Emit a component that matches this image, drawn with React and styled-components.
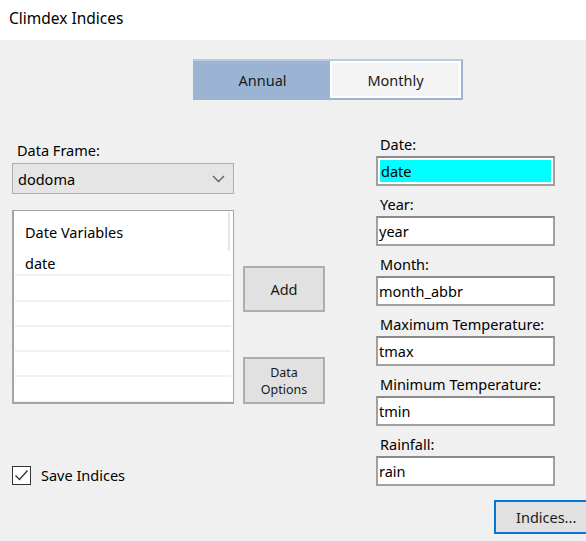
import React, { useState } from 'react';
import styled, { createGlobalStyle } from 'styled-components';

const GlobalStyle = createGlobalStyle`
  html, body {
    margin: 0;
    padding: 0;
    background: #f0f0f0;
  }
  * {
    box-sizing: border-box;
  }
`;

const Window = styled.div`
  width: 586px;
  height: 541px;
  overflow: hidden;
  background: #f0f0f0;
  font-family: "Noto Sans", "Open Sans", sans-serif;
  font-size: 14.5px;
  color: #000;
`;

const TitleBar = styled.div`
  height: 40px;
  background: #fff;
  display: flex;
  align-items: center;
  padding-left: 9px;
  padding-bottom: 4px;
  font-size: 15.5px;
`;

const ToggleRow = styled.div`
  padding: 19px 0 0 193px;
`;

const Toggle = styled.div`
  display: flex;
  width: 270px;
  height: 41px;
  background: #9bb4d3;
  border: 2px solid #9bb4d3;
  border-top-color: #b9cbe1;
`;

const Segment = styled.button`
  flex: ${props => (props.wide ? '0 0 135px' : '1')};
  border: ${props => (props.active ? 'none' : '2px solid #fff')};
  background: ${props => (props.active ? '#9bb4d3' : '#f4f4f4')};
  font-family: inherit;
  font-size: 14.5px;
  color: #1a1a1a;
  padding: 0;
  cursor: pointer;
`;

const Main = styled.div`
  display: flex;
  padding: 0 0 0 12px;
`;

const LeftColumn = styled.div`
  width: 222px;
  display: flex;
  flex-direction: column;
  padding-top: 40px;
`;

const FieldLabel = styled.div`
  line-height: 20px;
  padding-left: ${props => props.indent || 0}px;
`;

const Combo = styled.div`
  margin-top: 3px;
  height: 31px;
  background: #e5e5e5;
  border: 1px solid #adadad;
  display: flex;
  align-items: center;
  justify-content: space-between;
  padding: 0 8px 0 5px;
`;

const ListBox = styled.div`
  margin-top: 16px;
  height: 194px;
  background: #fff;
  border: 2px solid #a5a5a5;
  border-top-width: 1px;
  border-right-width: 1px;
  padding: 1px 2px 0 1px;
  display: flex;
  flex-direction: column;
  overflow: hidden;
`;

const ListHeader = styled.div`
  height: 39px;
  flex-shrink: 0;
  display: flex;
  align-items: center;
  padding-left: 10px;
  border-right: 2px solid #e6e6e6;
  margin-right: 1px;
`;

const ListRow = styled.div`
  height: 25.3px;
  flex-shrink: 0;
  display: flex;
  align-items: center;
  padding-left: 10px;
  border-bottom: 2px solid #f0f0f0;
`;

const CheckRow = styled.label`
  margin-top: 61px;
  display: flex;
  align-items: center;
  gap: 10px;
  height: 20px;
`;

const CheckBox = styled.span`
  width: 19px;
  height: 19px;
  border: 1px solid #333;
  background: #fff;
  display: flex;
  align-items: center;
  justify-content: center;
`;

const MiddleColumn = styled.div`
  width: 82px;
  margin-left: 9px;
  display: flex;
  flex-direction: column;
  padding-top: 166px;
`;

const ActionButton = styled.button`
  height: ${props => props.h}px;
  margin-top: ${props => props.top || 0}px;
  background: #e1e1e1;
  border: 2px solid #adadad;
  font-family: inherit;
  font-size: ${props => props.small ? '12.5px' : '14.5px'};
  line-height: ${props => props.small ? '17px' : 'normal'};
  color: #1a1a1a;
  padding: 0;
  cursor: pointer;
`;

const RightColumn = styled.div`
  width: 179px;
  margin-left: 51px;
  display: flex;
  flex-direction: column;
  padding-top: 34px;
`;

const Field = styled.div`
  display: flex;
  flex-direction: column;
  margin-bottom: 8px;
`;

const FieldLabelRight = styled.div`
  height: 22px;
  line-height: 20px;
  padding-left: 4px;
`;

const TextInput = styled.div`
  height: 30px;
  border: 2px solid #a0a0a0;
  border-top-color: #8c8c8c;
  background: ${props => (props.focused ? '#00ffff' : '#fff')};
  box-shadow: ${props => (props.focused ? 'inset 0 0 0 2px #fff' : 'none')};
  display: flex;
  align-items: center;
  padding-left: ${props => (props.focused ? '3px' : '1px')};
`;

const Footer = styled.div`
  display: flex;
  justify-content: flex-end;
  margin-top: 6px;
  margin-right: -4px;
`;

const IndicesButton = styled.button`
  width: 96px;
  height: 34px;
  background: #e1e1e1;
  border: 2px solid #0078d7;
  font-family: inherit;
  font-size: 14.5px;
  color: #1a1a1a;
  text-align: left;
  padding: 0 0 0 20px;
  cursor: pointer;
`;

const fields = [
  { label: 'Date:', value: 'date', focused: true },
  { label: 'Year:', value: 'year' },
  { label: 'Month:', value: 'month_abbr' },
  { label: 'Maximum Temperature:', value: 'tmax' },
  { label: 'Minimum Temperature:', value: 'tmin' },
  { label: 'Rainfall:', value: 'rain' },
];

const Chevron = () => (
  <svg width="13" height="8" viewBox="0 0 13 8">
    <path d="M1 1 L6.5 6.5 L12 1" fill="none" stroke="#606060" strokeWidth="1.3" />
  </svg>
);

const Check = () => (
  <svg width="15" height="13" viewBox="0 0 15 13">
    <path d="M1.5 6.5 L5.5 10.5 L13.5 1.5" fill="none" stroke="#333" strokeWidth="1.3" />
  </svg>
);

const App = () => {
  const [period, setPeriod] = useState('annual');

  return (
    <Window>
      <GlobalStyle />
      <TitleBar>Climdex Indices</TitleBar>
      <ToggleRow>
        <Toggle>
          <Segment wide active={period === 'annual'} onClick={() => setPeriod('annual')}>
            Annual
          </Segment>
          <Segment active={period === 'monthly'} onClick={() => setPeriod('monthly')}>
            Monthly
          </Segment>
        </Toggle>
      </ToggleRow>
      <Main>
        <LeftColumn>
          <FieldLabel indent={5}>Data Frame:</FieldLabel>
          <Combo>
            <span>dodoma</span>
            <Chevron />
          </Combo>
          <ListBox>
            <ListHeader>Date Variables</ListHeader>
            <ListRow>date</ListRow>
            {[...Array(5)].map((_, i) => (
              <ListRow key={i} />
            ))}
          </ListBox>
          <CheckRow>
            <CheckBox>
              <Check />
            </CheckBox>
            <span>Save Indices</span>
          </CheckRow>
        </LeftColumn>
        <MiddleColumn>
          <ActionButton h={46}>Add</ActionButton>
          <ActionButton h={47} top={45} small>
            Data
            <br />
            Options
          </ActionButton>
        </MiddleColumn>
        <RightColumn>
          {fields.map(f => (
            <Field key={f.label}>
              <FieldLabelRight>{f.label}</FieldLabelRight>
              <TextInput focused={f.focused}>{f.value}</TextInput>
            </Field>
          ))}
        </RightColumn>
      </Main>
      <Footer>
        <IndicesButton>Indices...</IndicesButton>
      </Footer>
    </Window>
  );
};

export default App;
